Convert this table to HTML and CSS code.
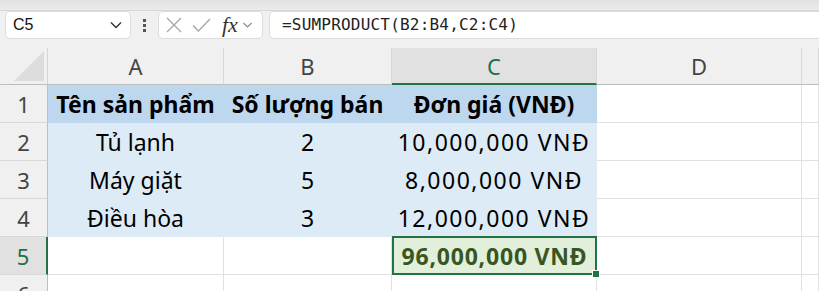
FILE: index.html
```html
<!DOCTYPE html>
<html lang="vi">
<head>
    <meta charset="UTF-8">
    <meta name="viewport" content="width=device-width, initial-scale=1.0">
    <title>Bảng tính</title>
    <link rel="stylesheet" href="styles.css">
</head>
<body>
    <div class="ribbon-edge"></div>

    <div class="formula-bar">
        <div class="name-box">
            <span>C5</span>
            <svg width="12" height="8" viewBox="0 0 12 8"><path d="M1 1.5 L6 6.5 L11 1.5" fill="none" stroke="#333" stroke-width="1.4"/></svg>
        </div>
        <div class="more-dots">
            <i></i><i></i><i></i>
        </div>
        <div class="fx-box">
            <svg width="16" height="16" viewBox="0 0 16 16"><path d="M1 1 L15 15 M15 1 L1 15" stroke="#a6a6a6" stroke-width="1.3"/></svg>
            <svg width="19" height="15" viewBox="0 0 19 15"><path d="M1 7.5 L6.5 13 L18 1" fill="none" stroke="#a6a6a6" stroke-width="1.3"/></svg>
            <span class="fx">fx</span>
            <svg width="9" height="6" viewBox="0 0 9 6"><path d="M0.5 1 L4.5 5 L8.5 1" fill="none" stroke="#888" stroke-width="1.1"/></svg>
        </div>
        <div class="formula-input">=SUMPRODUCT(B2:B4,C2:C4)</div>
    </div>

    <div class="sheet">
        <!-- column headers -->
        <div class="corner"><span class="corner-mark"></span></div>
        <div class="col-head">A</div>
        <div class="col-head">B</div>
        <div class="col-head selected">C</div>
        <div class="col-head">D</div>
        <div class="col-head"></div>

        <div class="row-head">1</div>
        <div class="cell title">Tên sản phẩm</div>
        <div class="cell title">Số lượng bán</div>
        <div class="cell title">Đơn giá (VNĐ)</div>
        <div class="cell"></div>
        <div class="cell"></div>

        <div class="row-head">2</div>
        <div class="cell data">Tủ lạnh</div>
        <div class="cell data">2</div>
        <div class="cell data money">10,000,000 VNĐ</div>
        <div class="cell"></div>
        <div class="cell"></div>

        <div class="row-head">3</div>
        <div class="cell data">Máy giặt</div>
        <div class="cell data">5</div>
        <div class="cell data money">8,000,000 VNĐ</div>
        <div class="cell"></div>
        <div class="cell"></div>

        <div class="row-head">4</div>
        <div class="cell data">Điều hòa</div>
        <div class="cell data">3</div>
        <div class="cell data money">12,000,000 VNĐ</div>
        <div class="cell"></div>
        <div class="cell"></div>

        <div class="row-head selected">5</div>
        <div class="cell"></div>
        <div class="cell"></div>
        <div class="cell total">96,000,000 VNĐ<span class="fill-handle"></span></div>
        <div class="cell"></div>
        <div class="cell"></div>

        <div class="row-head">6</div>
        <div class="cell"></div>
        <div class="cell"></div>
        <div class="cell"></div>
        <div class="cell"></div>
        <div class="cell"></div>
    </div>
</body>
</html>
```

FILE: styles.css
```css
body {
    margin: 0;
    background-color: #f0f0f0;
    font-family: "Noto Sans", "Open Sans", sans-serif;
    color: #000;
    overflow: hidden;
}

.ribbon-edge {
    height: 10px;
    background: linear-gradient(#e2e2e2, #ebebeb);
    border-bottom: 1px solid #d6d6d6;
}

/* name box, buttons and formula text */
.formula-bar {
    display: flex;
    align-items: center;
    height: 28px;
    padding: 0 0 0 5px;
    margin-bottom: 9px;
}

.name-box {
    width: 126px;
    height: 28px;
    box-sizing: border-box;
    display: flex;
    align-items: center;
    justify-content: space-between;
    padding: 0 8px 0 7px;
    background: #fff;
    border: 1px solid #dcdcdc;
    border-radius: 5px;
    font-family: "Liberation Sans", sans-serif;
    font-size: 16px;
    color: #111;
}

.more-dots {
    width: 27px;
    display: flex;
    flex-direction: column;
    align-items: center;
    gap: 2px;
}

.more-dots i {
    width: 3px;
    height: 3px;
    background: #555;
}

.fx-box {
    width: 105px;
    height: 28px;
    box-sizing: border-box;
    display: flex;
    align-items: center;
    gap: 10px;
    padding-left: 7px;
    background: #fff;
    border: 1px solid #dcdcdc;
    border-radius: 5px;
}

.fx {
    font-family: "Liberation Serif", serif;
    font-style: italic;
    font-size: 22px;
    line-height: 22px;
    color: #333;
    margin-left: 1px;
    margin-right: -5px;
}

.formula-input {
    flex: 1;
    height: 28px;
    box-sizing: border-box;
    margin-left: 6px;
    margin-right: -6px;
    padding-left: 12px;
    line-height: 26px;
    background: #fff;
    border: 1px solid #dcdcdc;
    border-radius: 5px;
    font-family: "DejaVu Sans Mono", monospace;
    font-size: 16px;
    letter-spacing: 0.2px;
    color: #222;
}

/* the grid */
.sheet {
    display: grid;
    grid-template-columns: 48px 176px 168px 205px 205px 1fr;
    grid-template-rows: 37px repeat(6, 38px);
    background: #fff;
}

.corner {
    position: relative;
    background: #f0f0f0;
    border-right: 1px solid #d4d4d4;
    border-bottom: 1px solid #bdbdbd;
}

.corner-mark {
    position: absolute;
    right: 3px;
    bottom: 3px;
    width: 30px;
    height: 30px;
    background: #dcdcdc;
    clip-path: polygon(100% 0, 100% 100%, 0 100%);
}

.col-head {
    display: flex;
    align-items: center;
    justify-content: center;
    background: #f0f0f0;
    border-right: 1px solid #d8d8d8;
    border-bottom: 1px solid #bdbdbd;
    font-size: 22px;
    color: #444;
}

.col-head.selected {
    background: #e1e1e1;
    color: #1e7145;
    border-bottom: 2px solid #217346;
}

.row-head {
    display: flex;
    align-items: center;
    justify-content: center;
    background: #f0f0f0;
    border-right: 1px solid #bdbdbd;
    border-bottom: 1px solid #d8d8d8;
    font-size: 22px;
    color: #444;
}

.row-head.selected {
    background: #e1e1e1;
    color: #1e7145;
    border-right: 2px solid #217346;
}

.cell {
    display: flex;
    align-items: center;
    justify-content: center;
    border-right: 1px solid #e1e1e1;
    border-bottom: 1px solid #e1e1e1;
    font-size: 23px;
    white-space: nowrap;
}

.cell.title {
    background: #bdd7ee;
    border-color: #bdd7ee;
    font-weight: bold;
}

.cell.data {
    background: #ddebf7;
    border-color: #ddebf7;
}

.cell.money {
    letter-spacing: 1.5px;
}

.cell.total {
    position: relative;
    margin: -1px 0 0 0;
    background: #e2efda;
    border: 2px solid #217346;
    font-weight: bold;
    letter-spacing: 0.8px;
    color: #375623;
}

.fill-handle {
    position: absolute;
    right: -5px;
    bottom: -5px;
    width: 6px;
    height: 6px;
    background: #217346;
    border: 1px solid #fff;
}
```
